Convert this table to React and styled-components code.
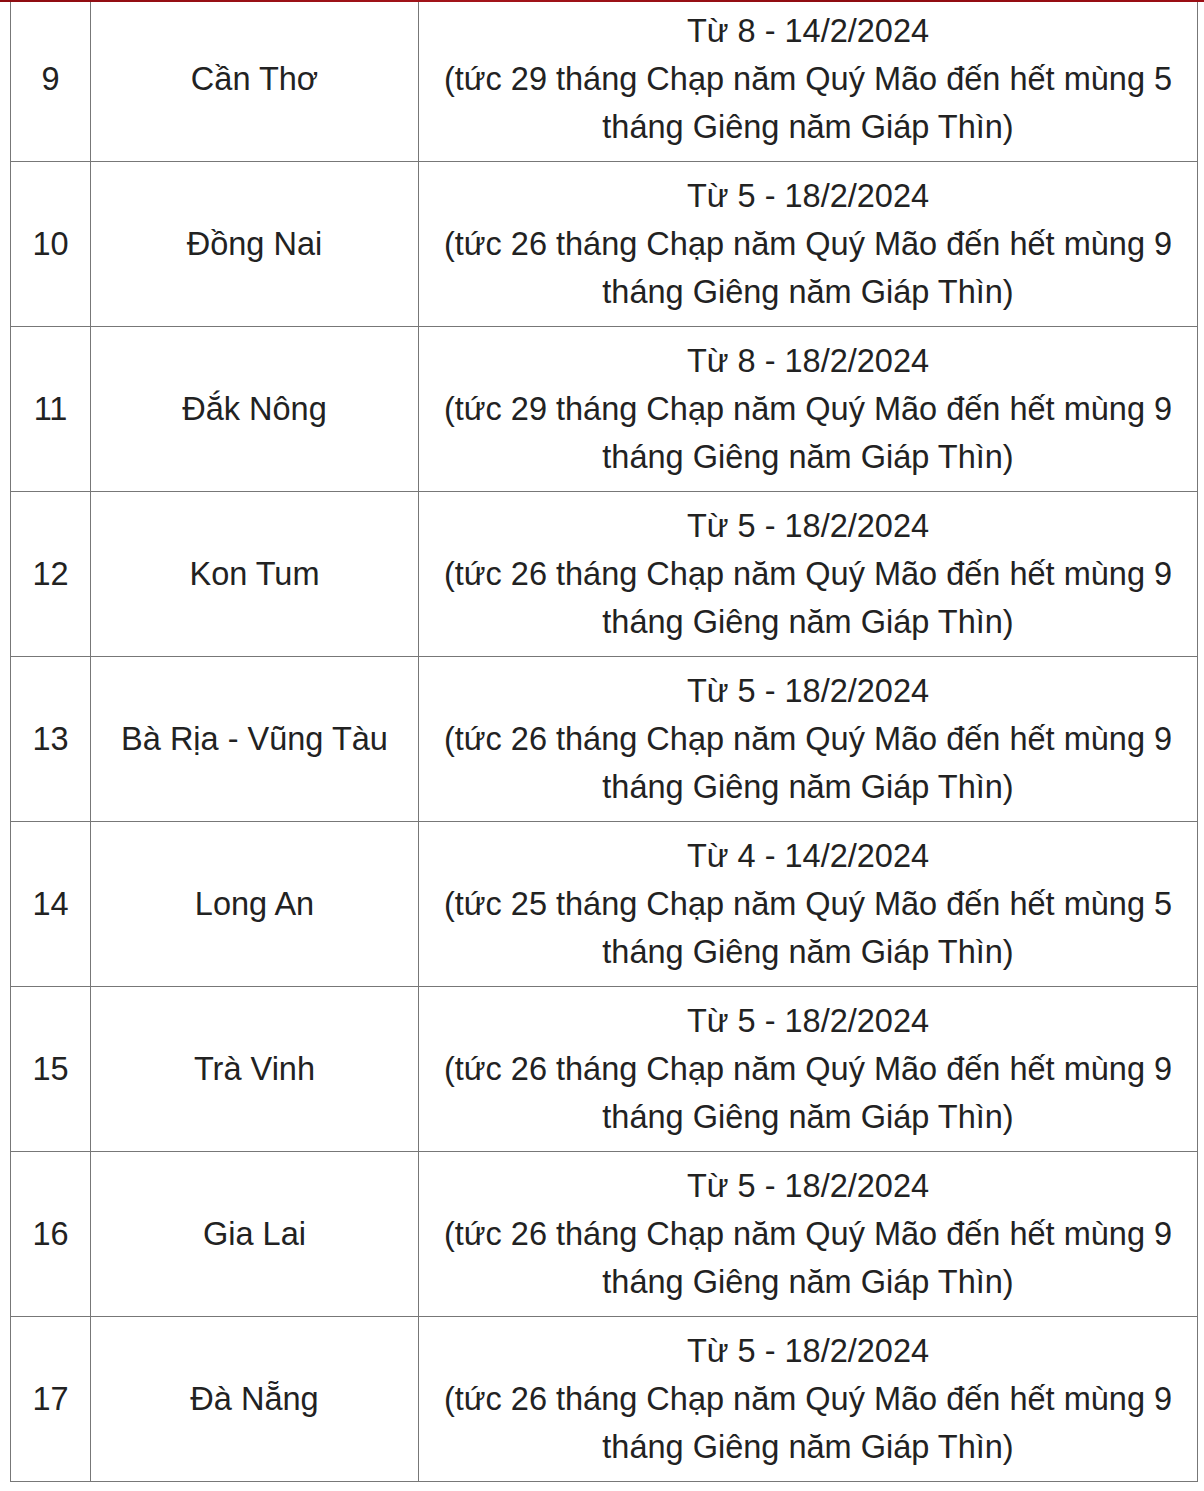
import React from "react";
import styled, { createGlobalStyle } from "styled-components";

const GlobalStyle = createGlobalStyle`
  html, body {
    margin: 0;
    padding: 0;
    background: #fff;
  }
  body {
    font-family: "Liberation Sans", Arial, sans-serif;
    color: #222;
  }
`;

const TopBar = styled.div`
  position: fixed;
  top: 0;
  left: 0;
  right: 0;
  height: 2px;
  background: linear-gradient(90deg, #8e0b10, #a3141a 40%, #8e0b10 70%, #9b0e14);
  z-index: 2;
`;

const Page = styled.div`
  padding: 0 7px 0 10px;
`;

const Table = styled.table`
  margin-top: -4px;
  width: 1187px;
  border-collapse: collapse;
  table-layout: fixed;
  font-size: 32.5px;
  line-height: 48px;
`;

const Cell = styled.td`
  width: ${(p) => p.$w}px;
  border: 1px solid #777;
  padding: 10px 0;
  text-align: center;
  vertical-align: middle;
  white-space: nowrap;
`;

const Note = styled.p`
  margin: 10px 0 0;
  font-size: 32.5px;
  line-height: 48px;
  text-align: justify;
`;

const rows = [
  [9, "Cần Thơ", "Từ 8 - 14/2/2024", "(tức 29 tháng Chạp năm Quý Mão đến hết mùng 5", "tháng Giêng năm Giáp Thìn)"],
  [10, "Đồng Nai", "Từ 5 - 18/2/2024", "(tức 26 tháng Chạp năm Quý Mão đến hết mùng 9", "tháng Giêng năm Giáp Thìn)"],
  [11, "Đắk Nông", "Từ 8 - 18/2/2024", "(tức 29 tháng Chạp năm Quý Mão đến hết mùng 9", "tháng Giêng năm Giáp Thìn)"],
  [12, "Kon Tum", "Từ 5 - 18/2/2024", "(tức 26 tháng Chạp năm Quý Mão đến hết mùng 9", "tháng Giêng năm Giáp Thìn)"],
  [13, "Bà Rịa - Vũng Tàu", "Từ 5 - 18/2/2024", "(tức 26 tháng Chạp năm Quý Mão đến hết mùng 9", "tháng Giêng năm Giáp Thìn)"],
  [14, "Long An", "Từ 4 - 14/2/2024", "(tức 25 tháng Chạp năm Quý Mão đến hết mùng 5", "tháng Giêng năm Giáp Thìn)"],
  [15, "Trà Vinh", "Từ 5 - 18/2/2024", "(tức 26 tháng Chạp năm Quý Mão đến hết mùng 9", "tháng Giêng năm Giáp Thìn)"],
  [16, "Gia Lai", "Từ 5 - 18/2/2024", "(tức 26 tháng Chạp năm Quý Mão đến hết mùng 9", "tháng Giêng năm Giáp Thìn)"],
  [17, "Đà Nẵng", "Từ 5 - 18/2/2024", "(tức 26 tháng Chạp năm Quý Mão đến hết mùng 9", "tháng Giêng năm Giáp Thìn)"],
];

export default function App() {
  return (
    <>
      <GlobalStyle />
      <TopBar />
      <Page>
        <Table>
          <tbody>
            {rows.map(([n, place, from, l2, l3]) => (
              <tr key={n}>
                <Cell $w={79}>{n}</Cell>
                <Cell $w={327}>{place}</Cell>
                <Cell $w={778}>
                  {from}
                  <br />
                  {l2}
                  <br />
                  {l3}
                </Cell>
              </tr>
            ))}
          </tbody>
        </Table>
        <Note>
          Như vậy, so với học sinh cả nước, học sinh các tỉnh phía Nam được nghỉ Tết
          nhiều ngày hơn, trong đó có nơi được nghỉ đến 2 tuần.
        </Note>
      </Page>
    </>
  );
}
